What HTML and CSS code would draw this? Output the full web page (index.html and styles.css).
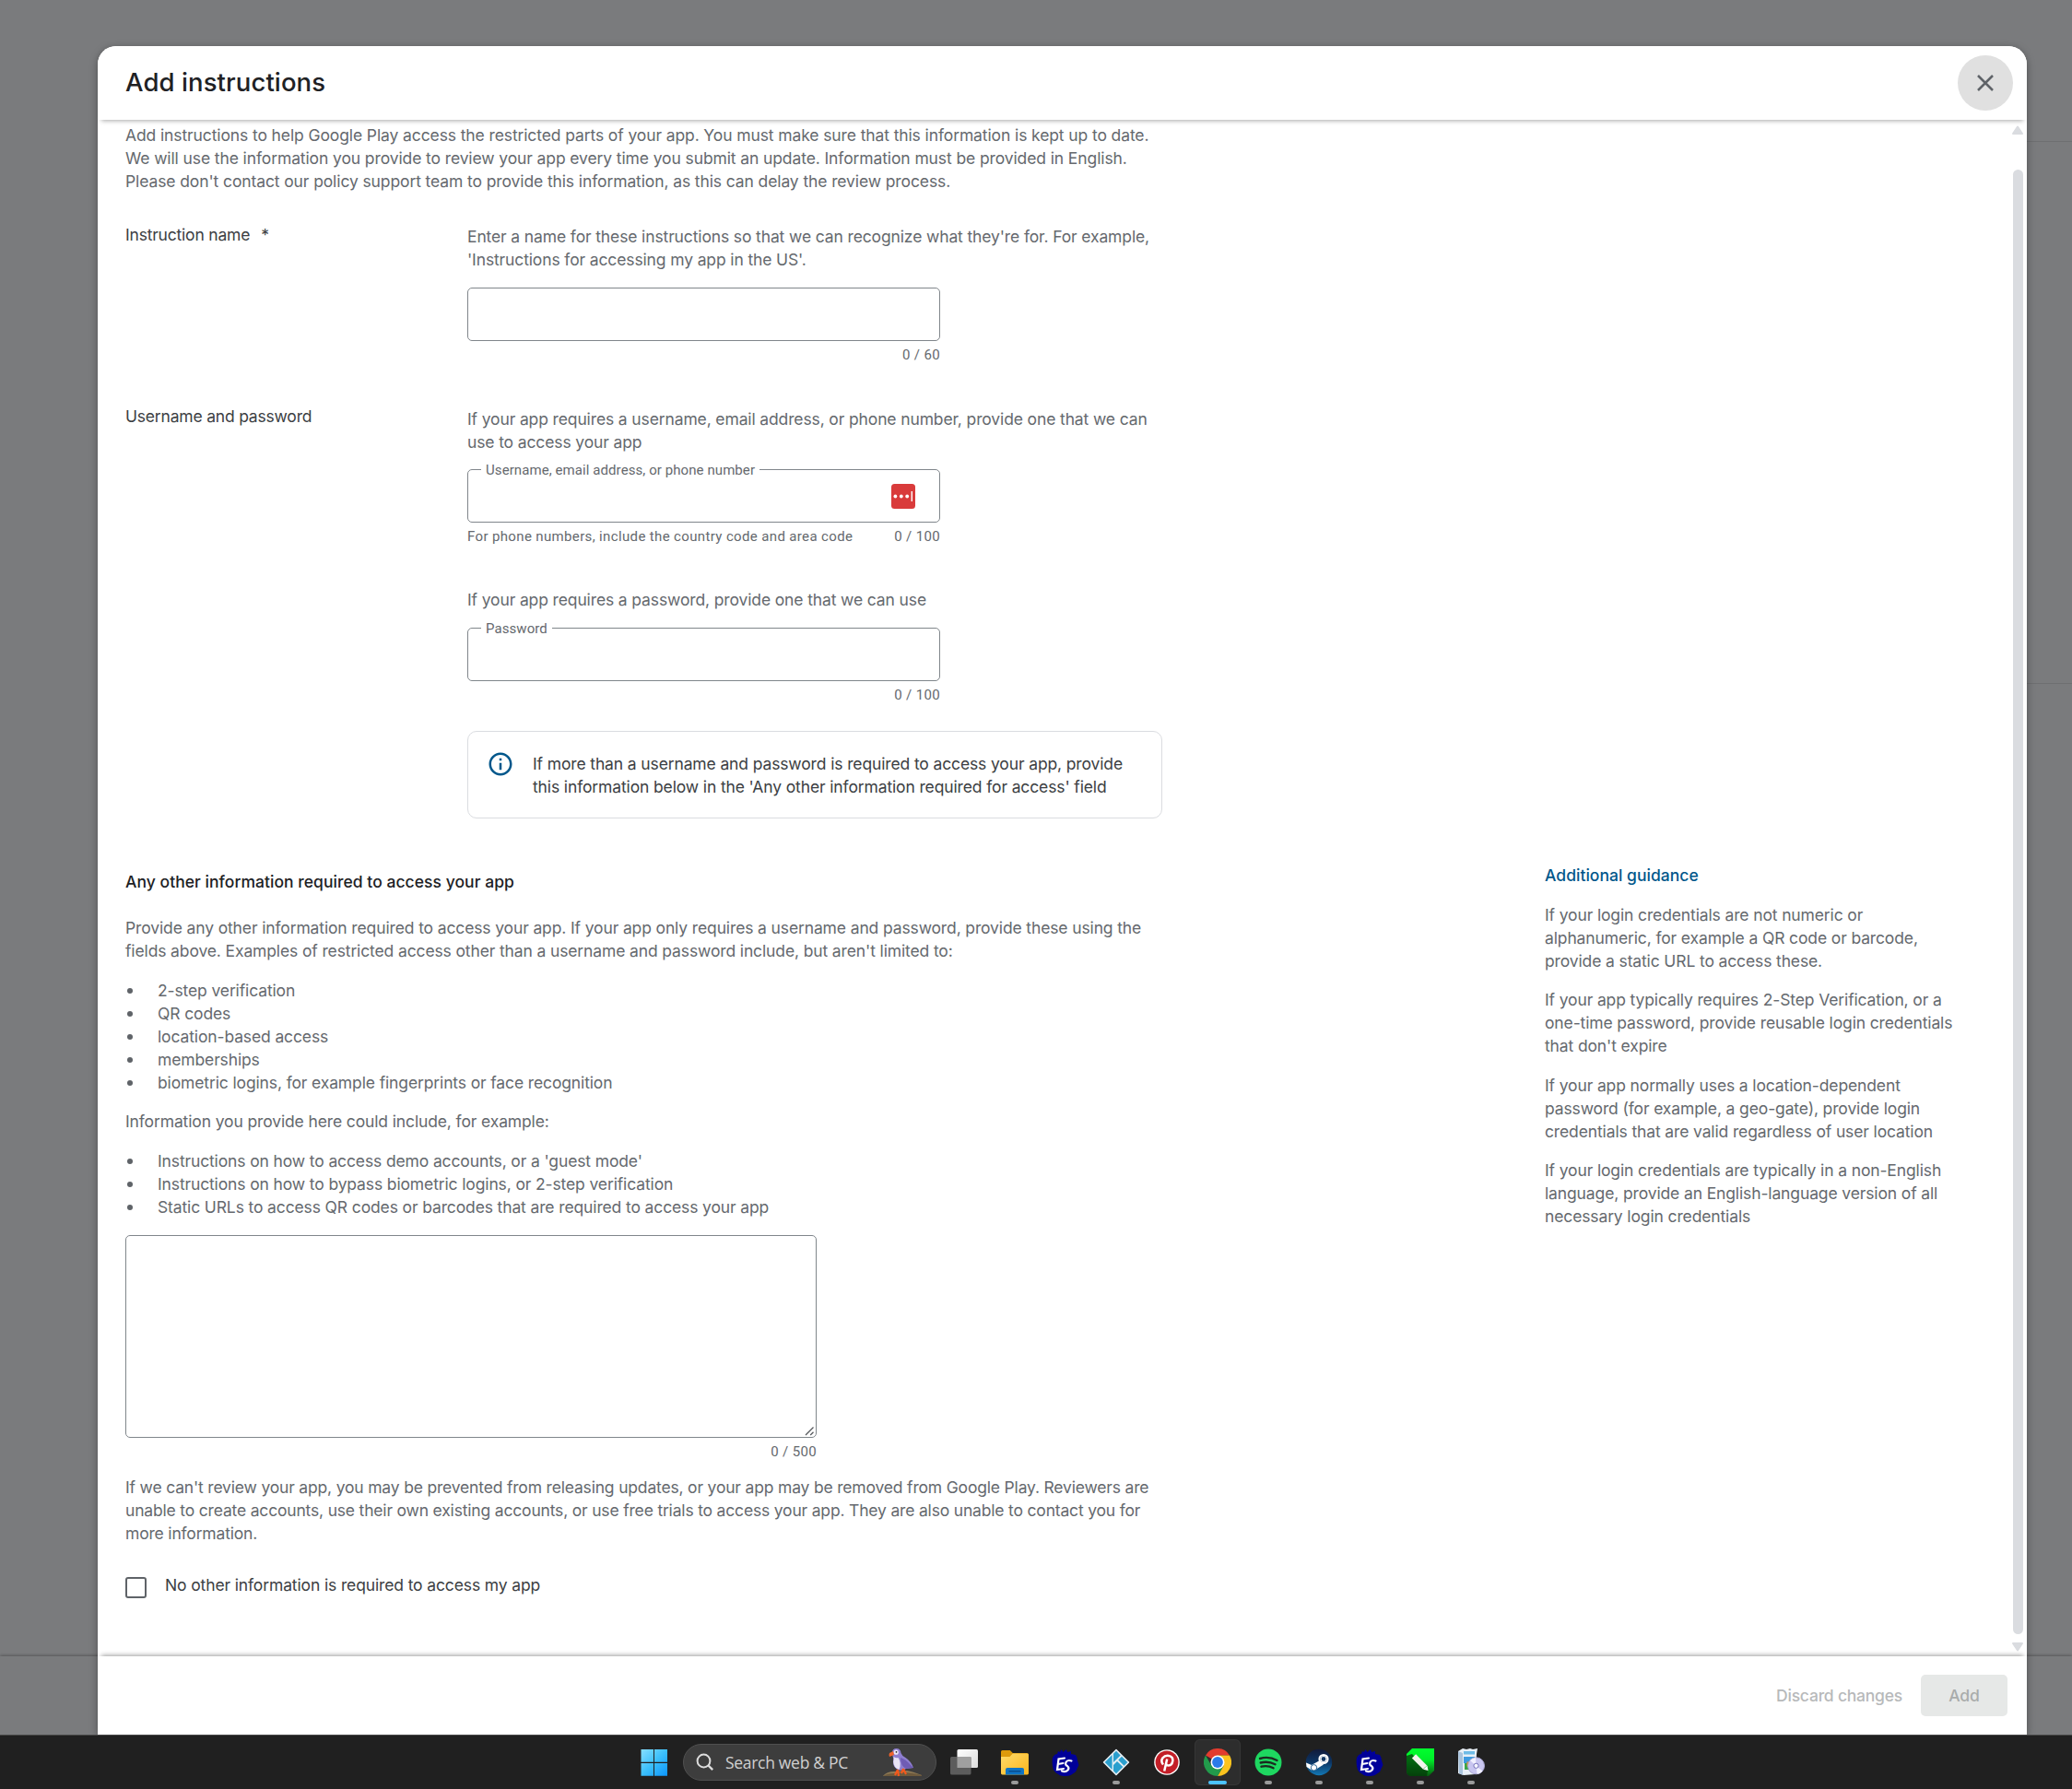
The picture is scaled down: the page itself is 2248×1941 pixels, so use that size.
FILE: index.html
```html
<!DOCTYPE html>
<html lang="en">
<head>
<meta charset="utf-8">
<title>Add instructions</title>
<link rel="stylesheet" href="styles.css">
</head>
<body>
<div class="stage">
  <div class="backdrop">
    <div class="backdrop-top"></div>
    <div class="backdrop-mid"></div>
    <div class="backdrop-rest"></div>
    <div class="backdrop-footer"></div>
  </div>

  <section class="dialog" role="dialog" aria-labelledby="title">
    <header class="dialog-header">
      <h1 id="title">Add instructions</h1>
      <button class="close" aria-label="Close">
        <svg width="20" height="20" viewBox="0 0 20 20"><path d="M2 2 18 18M18 2 2 18" stroke="#5f6368" stroke-width="2.5" fill="none"/></svg>
      </button>
    </header>

    <div class="dialog-body">
      <div class="content">
        <p class="intro">Add instructions to help Google Play access the restricted parts of your app. You must make sure that this information is kept up to date.<br>We will use the information you provide to review your app every time you submit an update. Information must be provided in English.<br>Please don't contact our policy support team to provide this information, as this can delay the review process.</p>

        <div class="form-row row-name">
          <div class="row-label">Instruction name<span class="required">*</span></div>
          <div class="row-fields">
            <p>Enter a name for these instructions so that we can recognize what they're for. For example,<br>'Instructions for accessing my app in the US'.</p>
            <div class="input"></div>
            <div class="helper"><span></span><span>0 / 60</span></div>
          </div>
        </div>

        <div class="form-row row-login">
          <div class="row-label">Username and password</div>
          <div class="row-fields">
            <p>If your app requires a username, email address, or phone number, provide one that we can<br>use to access your app</p>
            <div class="input">
              <label>Username, email address, or phone number</label>
              <svg class="vault" width="26" height="27" viewBox="0 0 26 27"><rect width="26" height="27" rx="3.5" fill="#d93b3b"/><g fill="#fff"><circle cx="4.4" cy="13.5" r="1.9"/><circle cx="10.8" cy="13.5" r="1.9"/><circle cx="17.2" cy="13.5" r="1.9"/><rect x="21.6" y="8" width="1.4" height="11"/></g></svg>
            </div>
            <div class="helper wide"><span>For phone numbers, include the country code and area code</span><span>0 / 100</span></div>
            <p class="password-text">If your app requires a password, provide one that we can use</p>
            <div class="input"><label>Password</label></div>
            <div class="helper"><span></span><span>0 / 100</span></div>
            <div class="notice">
              <svg width="30" height="30" viewBox="0 0 24 24"><path fill="#01578b" d="M11 7h2v2h-2zm0 4h2v6h-2zm1-9C6.48 2 2 6.48 2 12s4.480 10 10 10 10-4.480 10-10S17.520 2 12 2zm0 18c-4.410 0-8-3.590-8-8s3.590-8 8-8 8 3.590 8 8-3.590 8-8 8z"/></svg>
              <p>If more than a username and password is required to access your app, provide<br>this information below in the 'Any other information required for access' field</p>
            </div>
          </div>
        </div>

        <div class="other">
          <div class="other-main">
            <h2>Any other information required to access your app</h2>
            <p>Provide any other information required to access your app. If your app only requires a username and password, provide these using the<br>fields above. Examples of restricted access other than a username and password include, but aren't limited to:</p>
            <ul>
              <li>2-step verification</li>
              <li>QR codes</li>
              <li>location-based access</li>
              <li>memberships</li>
              <li>biometric logins, for example fingerprints or face recognition</li>
            </ul>
            <p>Information you provide here could include, for example:</p>
            <ul>
              <li>Instructions on how to access demo accounts, or a 'guest mode'</li>
              <li>Instructions on how to bypass biometric logins, or 2-step verification</li>
              <li>Static URLs to access QR codes or barcodes that are required to access your app</li>
            </ul>
            <div class="textarea">
              <svg width="11" height="11" viewBox="0 0 11 11"><path d="M1 10 9.500 1.500M6.200 10 9.500 6.700" stroke="#55585c" stroke-width="1.300" fill="none"/></svg>
            </div>
            <div class="helper area-helper"><span></span><span>0 / 500</span></div>
            <p class="warning">If we can't review your app, you may be prevented from releasing updates, or your app may be removed from Google Play. Reviewers are<br>unable to create accounts, use their own existing accounts, or use free trials to access your app. They are also unable to contact you for<br>more information.</p>
            <div class="check-row"><span class="checkbox"></span><span>No other information is required to access my app</span></div>
          </div>
          <aside class="guidance">
            <h3>Additional guidance</h3>
            <p>If your login credentials are not numeric or<br>alphanumeric, for example a QR code or barcode,<br>provide a static URL to access these.</p>
            <p>If your app typically requires 2-Step Verification, or a<br>one-time password, provide reusable login credentials<br>that don't expire</p>
            <p>If your app normally uses a location-dependent<br>password (for example, a geo-gate), provide login<br>credentials that are valid regardless of user location</p>
            <p>If your login credentials are typically in a non-English<br>language, provide an English-language version of all<br>necessary login credentials</p>
          </aside>
        </div>
      </div>
      <div class="scrollbar">
        <svg width="14" height="11" viewBox="0 0 14 11"><path d="M7 1.500 12 9H2z" fill="#dadce0" stroke="#dadce0" stroke-width="2" stroke-linejoin="round"/></svg>
        <div class="thumb"></div>
        <svg width="14" height="11" viewBox="0 0 14 11"><path d="M7 9.500 12 2H2z" fill="#dadce0" stroke="#dadce0" stroke-width="2" stroke-linejoin="round"/></svg>
      </div>
    </div>

    <footer class="dialog-footer">
      <span class="discard">Discard changes</span>
      <button class="add">Add</button>
    </footer>
  </section>
</div>

<nav class="taskbar">
  <div class="task">
    <svg width="30" height="30" viewBox="0 0 30 30"><defs><linearGradient id="win" x1="0" y1="0" x2="30" y2="30" gradientUnits="userSpaceOnUse"><stop offset="0" stop-color="#8be0ff"/><stop offset=".5" stop-color="#3cc0fb"/><stop offset="1" stop-color="#0a93fb"/></linearGradient></defs><path fill="url(#win)" d="M.5 1h13.500v13.700H.5zM15 1h14v13.700H15zM.5 15.900H14v13.800H.5zM15 15.900h14v13.800H15z"/></svg>
  </div>
  <div class="search">
    <svg width="20" height="20" viewBox="0 0 20 20"><circle cx="8.500" cy="8.500" r="6.900" fill="none" stroke="#dcdcdc" stroke-width="2"/><path d="m13.500 13.500 4.700 4.700" stroke="#dcdcdc" stroke-width="2.400"/></svg>
    <span>Search web &amp; PC</span>
    <svg class="bird" width="44" height="32" viewBox="0 0 44 32"><path d="M1 31q4-5 12-5l14-1q6 1 16 5v1z" fill="#8f7a55"/><path d="M1 31q4-3 12-3 12-3 30 2v1z" fill="#6d5a3d"/><path d="M11 6q0-5 4.500-5Q20 1 20.500 6q1 3 5 5 6 4 8.500 11l-8 1q-3 2.500-8 1.500Q12 22 12 15.500q1-4-.5-6z" fill="#8f7fd0"/><path d="M12.500 10q3 2 5 1 4 6 1 13-6-2-6.300-8.500.6-3 .3-5.500z" fill="#e9e4f6"/><path d="M20 11q6 2 10 7l4 4-8 1q-6-3-6-12z" fill="#6f5cb4"/><circle cx="15.200" cy="5.200" r="2.600" fill="#ece8f8"/><circle cx="15.500" cy="4.800" r=".9" fill="#222"/><path d="M12 4 8 6q-1 2 0 4l5-2z" fill="#f0632b"/><path d="m17 24-3 6m3-6 1 7m5-8-2 5m2-5 3 6" stroke="#f4581c" stroke-width="2.200" fill="none"/></svg>
  </div>
  <div class="task">
    <svg width="30" height="30" viewBox="0 0 30 30"><defs><linearGradient id="tv" x2="1" y2="1"><stop stop-color="#fff"/><stop offset="1" stop-color="#dcdcdc"/></linearGradient></defs><rect x="7.500" y="1" width="22.500" height="20" rx="1.500" fill="url(#tv)"/><rect x="0" y="9" width="22.500" height="19.500" rx="1.500" fill="#5c5c5c"/><path d="M7.500 9h15v12h-15z" fill="#a0a0a0"/></svg>
  </div>
  <div class="task open">
    <svg width="30" height="30" viewBox="0 0 30 30"><defs><linearGradient id="fo" x2="1" y2="1"><stop stop-color="#ffdc6b"/><stop offset="1" stop-color="#fcb51c"/></linearGradient></defs><path d="M0 3.500Q0 2 1.500 2h8.300l3 3H28q2 0 2 2v8H0z" fill="#dd9a0b"/><path d="M0 9h9.500l3.300-3.500H28.500Q30 5.500 30 7v20q0 1.400-1.500 1.400h-27Q0 28.400 0 27z" fill="url(#fo)"/><path d="M5 28.400V23q0-2 2-2h16q2 0 2 2v5.400z" fill="#0f74c4"/><path d="M8.500 24.800h13" stroke="#07437f" stroke-width="1.200"/></svg>
  </div>
  <div class="task">
    <svg width="30" height="30" viewBox="0 0 30 30"><path d="M1 10Q3 6 6 6l1-3 2 1 1.500-3 2 3L16 1l1 3 4-1v3l5 1q2 3 2 6l1.500 5-2 4q-1 4-4 5-3 3-8 3-6 .5-9-2.500-4-2-5-6-1.500-6-.5-11.500z" fill="#000099"/><path d="M14 10.500 7.500 11.500 6 23l7-1M7 17l5.500-1M21.500 13.500q-4.500-1.500-6 1.500-1.200 3 1.500 4 2.500 2 .5 4.500-2.500 2.500-6.500 1" fill="none" stroke="#fff" stroke-width="2.200" stroke-linecap="round"/></svg>
  </div>
  <div class="task open">
    <svg width="30" height="30" viewBox="0 0 30 30"><path d="M15 1.500 28.500 15 15 28.500 1.500 15z" fill="#e4eef3" stroke="#e4eef3" stroke-width="1.500" stroke-linejoin="round"/><path d="M15 2.700 19.700 7.400 12 15V5.700zM21 8.700 27.300 15 23.500 18.800 17.300 12.500zM10.600 7.100V22.900L2.700 15zM16 13.900 22.300 20.100 15 27.300 12 24.300V17.900z" fill="#2a9fce"/></svg>
  </div>
  <div class="task">
    <svg width="30" height="30" viewBox="0 0 30 30"><circle cx="15" cy="15" r="13.800" fill="#fff"/><circle cx="15" cy="15" r="12.400" fill="#c31e27"/><path d="M11 17.500q-3-3.500-.5-7.200 2.500-3 6.500-2.400 4.800 1 4.300 5.600-.8 5-4.500 5-2 0-2.600-1.700M15.200 11.500 12.200 24.500" fill="none" stroke="#fff" stroke-width="2.500"/></svg>
  </div>
  <div class="task active">
    <svg width="30" height="30" viewBox="0 0 30 30"><path d="M15 15 2 7.500A15 15 0 0 1 28 7.500H15z" fill="#e33b2e"/><path d="M28 7.500A15 15 0 0 1 15 30l6.500-11.300L15 7.500z" fill="#fcc31e"/><path d="M2 7.500A15 15 0 0 0 15 30l6.500-11.300H8.500z" fill="#229a4b"/><circle cx="15" cy="15" r="7.500" fill="#fff"/><circle cx="15" cy="15" r="5.900" fill="#2b7bea"/></svg>
  </div>
  <div class="task open">
    <svg width="30" height="30" viewBox="0 0 30 30"><circle cx="15" cy="15" r="14.500" fill="#1ed760"/><path d="M6 11q9.500-3 18.500 2M6.700 15.500q8.300-2.200 15.800 1.800M7.500 19.700q7-1.700 13 1.600" fill="none" stroke="#1b2a20" stroke-width="2.400" stroke-linecap="round"/></svg>
  </div>
  <div class="task open">
    <svg width="30" height="30" viewBox="0 0 30 30"><defs><linearGradient id="st" x2="0" y2="1"><stop stop-color="#111a3a"/><stop offset=".5" stop-color="#0b3564"/><stop offset="1" stop-color="#1378b4"/></linearGradient></defs><circle cx="15" cy="15" r="14.200" fill="url(#st)"/><path d="M1 15.500 7 18l8-4.500 5 4-8 5Q10 25 7 23.500L1.500 20z" fill="#fff"/><circle cx="20" cy="11.500" r="4.600" fill="#143a66" stroke="#fff" stroke-width="2"/><circle cx="20" cy="11.500" r="3" fill="none" stroke="#fff" stroke-width="1.200"/><circle cx="9.500" cy="20.800" r="3.200" fill="#fff" stroke="#145384" stroke-width=".9"/></svg>
  </div>
  <div class="task open">
    <svg width="30" height="30" viewBox="0 0 30 30"><path d="M1 10Q3 6 6 6l1-3 2 1 1.500-3 2 3L16 1l1 3 4-1v3l5 1q2 3 2 6l1.500 5-2 4q-1 4-4 5-3 3-8 3-6 .5-9-2.500-4-2-5-6-1.500-6-.5-11.500z" fill="#000099"/><path d="M14 10.500 7.500 11.500 6 23l7-1M7 17l5.500-1M21.500 13.500q-4.500-1.500-6 1.500-1.200 3 1.500 4 2.500 2 .5 4.500-2.500 2.500-6.500 1" fill="none" stroke="#fff" stroke-width="2.200" stroke-linecap="round"/></svg>
  </div>
  <div class="task open">
    <svg width="30" height="30" viewBox="0 0 30 30"><defs><linearGradient id="cd" x2="0" y2="1"><stop stop-color="#00ff2e"/><stop offset=".4" stop-color="#00ee2a"/><stop offset="1" stop-color="#075a10"/></linearGradient></defs><path d="M0 6 6 0h24v24l-6 6H6q-6 0-6-6z" fill="url(#cd)"/><path d="M0 8 6 6l17 18-1 6H6q-6 0-6-6z" fill="#04380a" opacity=".75"/><path d="M8 8.300 20 20.500" stroke="#f3f3ee" stroke-width="6"/><path d="m22.500 18.500 1 5.500-5.500-1.200z" fill="#fff"/></svg>
  </div>
  <div class="task open">
    <svg width="30" height="30" viewBox="0 0 30 30"><path d="M1 3 6 0l4 1 4-1 3 1 5-1-1 6-1 22-13 1-6-2z" fill="#e8eff6"/><path d="M1 3 6 5v24l-4-2z" fill="#a9c3dc"/><path d="M7 3h12v3.500H7z" fill="#6fbbe6"/><path d="M7 9h12v7H7z" fill="#3e9be0"/><path d="M8 16h5v7H8z" fill="#3aa648"/><path d="M10.500 14.500h4v5h-4z" fill="#f08a1e"/><circle cx="20.500" cy="18.800" r="9" fill="#c9c6f0" stroke="#a9a7d2"/><path d="M20.500 19 14 13a9 9 0 0 1 6-3zM20.500 19l7 5.500a9 9 0 0 1-6 3.300z" fill="#f1f0ff"/><circle cx="20.500" cy="18.800" r="2.600" fill="#f5f5ff" stroke="#7672bb"/></svg>
  </div>
</nav>
</body>
</html>
```
FILE: styles.css
```css
* { box-sizing: border-box; }

body {
  margin: 0;
  width: 2248px;
  height: 1941px;
  overflow: hidden;
  display: flex;
  flex-direction: column;
  font: 17.5px/25px "Inter", "Open Sans", sans-serif;
  letter-spacing: -0.13px;
  color: #65696e;
}

h1, h2, h3, p, ul { margin: 0; }
button { font: inherit; letter-spacing: inherit; border: 0; padding: 0; }
svg { display: block; flex: none; }

/* page behind the dialog */
.stage { display: grid; height: 1882px; flex: none; overflow: hidden; }
.stage > * { grid-area: 1 / 1; }
.backdrop { display: flex; flex-direction: column; background: #7a7b7d; }
.backdrop-top { height: 154px; margin-left: 400px; border-bottom: 1px solid #6e6f71; }
.backdrop-mid { height: 588px; margin-left: 400px; border-bottom: 1px solid #6e6f71; }
.backdrop-rest { flex: 1; }
.backdrop-footer { height: 85px; box-shadow: 0 -1px 3px rgba(0, 0, 0, .3); }

/* dialog */
.dialog {
  margin: 50px 49px 0 106px;
  display: flex;
  flex-direction: column;
  background: #fff;
  border-radius: 20px 20px 0 0;
  box-shadow: 0 2px 8px rgba(0, 0, 0, .35);
  position: relative;
}
.dialog-header {
  height: 80px;
  flex: none;
  display: flex;
  align-items: center;
  justify-content: space-between;
  padding: 0 15px 0 30px;
  border-radius: 20px 20px 0 0;
  background: #fff;
  box-shadow: 0 5px 5px -4px rgba(0, 0, 0, .35);
  position: relative;
}
h1 { font-size: 27.5px; line-height: 35px; font-weight: 500; color: #202124; letter-spacing: 0.1px; padding-bottom: 2px; }
.close { width: 60px; height: 60px; border-radius: 50%; background: #e0e0e0; display: grid; place-items: center; }

.dialog-body { height: 1667px; flex: none; display: flex; overflow: hidden; white-space: nowrap; }
.content { flex: 1; padding: 4px 0 0 30px; }
.intro { letter-spacing: -0.11px; }

.form-row { display: flex; }
.row-name { margin-top: 33px; height: 197px; }
.row-login { height: 505px; }
.row-label { width: 371px; color: #3c4043; letter-spacing: -0.2px; }
.required { margin-left: 12px; }
.row-fields { width: 754px; padding-top: 2px; }
.row-login .row-fields { padding-top: 3px; }

.input {
  position: relative;
  width: 513px;
  height: 58px;
  margin-top: 18px;
  border: 1px solid #80868b;
  border-radius: 5px;
  display: flex;
  align-items: center;
  justify-content: flex-end;
  padding-right: 26px;
}
.row-login .input { margin-top: 17px; }
.input label {
  position: absolute;
  left: 14px;
  top: -10px;
  padding: 0 5px;
  background: #fff;
  font: 15px/20px "Roboto", sans-serif;
  letter-spacing: 0.08px;
}
.helper {
  width: 513px;
  margin-top: 5px;
  display: flex;
  justify-content: space-between;
  font: 15px/20px "Roboto", sans-serif;
  letter-spacing: 0.36px;
}
.row-login .password-text { margin-top: 46px; }
.row-login .password-text + .input { margin-top: 18px; }

.notice {
  margin-top: 29px;
  height: 95px;
  border: 1px solid #dadce0;
  border-radius: 10px;
  padding: 22px 20px;
  display: flex;
  gap: 20px;
  color: #3c4043;
}
.notice svg { margin-top: -2px; }

.other { display: flex; }
.other-main { width: 1540px; }
h2 { font-size: 17.5px; line-height: 25px; font-weight: 500; color: #202124; letter-spacing: 0.04px; margin-bottom: 25px; }
ul { list-style: none; padding: 0; margin: 18px 0 17px; }
li { display: flex; align-items: center; gap: 27px; padding-left: 2px; }
li::before { content: ""; width: 6px; height: 6px; border-radius: 50%; background: #5f6368; margin-top: 1px; }

.textarea {
  width: 750px;
  height: 220px;
  margin-top: 18px;
  border: 1px solid #80868b;
  border-radius: 5px;
  display: flex;
  align-items: flex-end;
  justify-content: flex-end;
  padding: 0 1px 1px 0;
}
.area-helper { width: 750px; margin-top: 5px; }
.warning { margin-top: 16px; letter-spacing: -0.18px; }
.check-row { display: flex; gap: 20px; margin-top: 31px; color: #3c4043; }
.checkbox { width: 23px; height: 23px; border: 2.500px solid #5f6368; border-radius: 3px; margin-top: 4px; }

.guidance { margin-top: -7px; }
.guidance h3 { font-size: 17.5px; line-height: 25px; font-weight: 500; color: #01578b; letter-spacing: 0.03px; }
.guidance p { margin-top: 17.500px; }

.scrollbar { width: 16px; padding: 6px 0 5px; display: flex; flex-direction: column; }
.scrollbar svg { margin-left: -1px; }
.thumb { flex: 1; width: 11px; margin: 37px 0 8px 1px; border-radius: 6px; background: #dadce0; }

.dialog-footer {
  flex: 1;
  display: flex;
  align-items: flex-start;
  justify-content: flex-end;
  gap: 20px;
  padding: 20px 21px 0 0;
  background: #fff;
  box-shadow: 0 -5px 5px -4px rgba(0, 0, 0, .4);
  font-weight: 500;
  line-height: 45px;
}
.discard { color: #b7b9ba; letter-spacing: -0.22px; }
.add { width: 94px; height: 45px; border-radius: 5px; background: #e6e8e7; color: #a9acab; }

/* taskbar */
.taskbar {
  height: 59px;
  padding: 4px 0 0 685px;
  display: flex;
  gap: 5px;
  background: #202020;
  border-top: 1px solid #484848;
}
.task { width: 50px; height: 50px; flex: none; display: flex; flex-direction: column; align-items: center; padding-top: 10px; border-radius: 6px; }
.task.open::after, .task.active::after { content: ""; width: 8px; height: 4px; margin-top: 5px; border-radius: 2px; background: #9a9a9a; }
.task.active { background: #2d2d2d; box-shadow: inset 0 0 0 1px #363636; }
.task.active::after { width: 20px; background: #4cc2ff; }
.search {
  width: 275px;
  height: 40px;
  margin: 5px 0 0 1px;
  flex: none;
  display: flex;
  align-items: center;
  padding: 0 14px 0 13px;
  border: 1px solid #505050;
  border-radius: 20px;
  background: #3d3d3d;
  font: 17.5px/24px "Open Sans", sans-serif;
  letter-spacing: -0.3px;
  color: #d0d0d0;
}
.search span { margin-left: 12px; }
.bird { margin-left: auto; }
```
